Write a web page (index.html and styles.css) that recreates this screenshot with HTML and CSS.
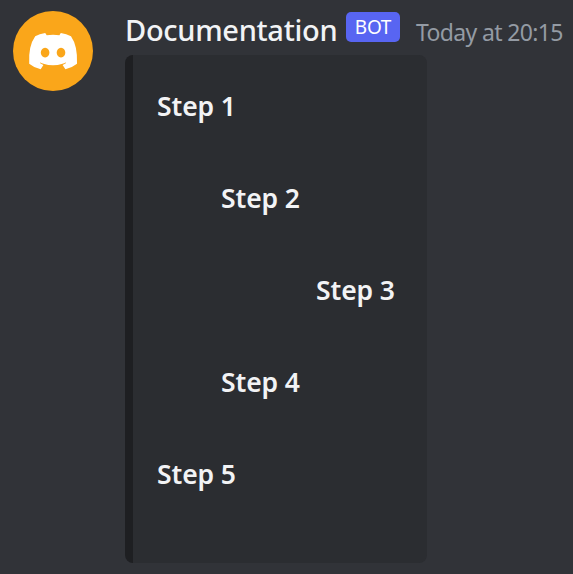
FILE: index.html
```html
<!DOCTYPE html>
<html lang="en">
<head>
<meta charset="utf-8">
<title>Documentation</title>
<link rel="stylesheet" href="styles.css">
</head>
<body>
<article class="message">
  <div class="avatar">
    <svg class="logo" viewBox="29 33 48 37" width="48" height="37">
      <path fill="#fff" fill-rule="evenodd" d="M45.2 32.9L46.7 35.2Q53 34.500 59.4 35.2L60.8 32.9Q66.5 33.8 71 36.2Q77.8 46 77 63.7Q72 67.7 65.4 69.3L62.6 65Q64.500 64.200 66.200 63L65.600 62.500Q64 63.200 62.500 63.800Q53 66.800 43.500 63.800Q42 63.200 40.400 62.500L39.800 63Q41.500 64.200 43.400 65L40.700 69.300Q34 67.700 29.200 63.700Q28.200 46 35.200 36.200Q39.500 33.800 45.200 32.900ZM45.100 47.800a4.300 4.800 0 1 0 .01 0ZM61 47.800a4.300 4.800 0 1 0 .01 0Z"/>
    </svg>
  </div>
  <div class="content">
    <header class="header">
      <span class="name">Documentation</span>
      <span class="bot">BOT</span>
      <time class="time">Today at 20:15</time>
    </header>
    <section class="embed">
      <div class="step left">Step 1</div>
      <div class="step middle">Step 2</div>
      <div class="step right">Step 3</div>
      <div class="step middle">Step 4</div>
      <div class="step left">Step 5</div>
    </section>
  </div>
</article>
</body>
</html>
```
FILE: styles.css
```css
* { box-sizing: border-box; }
body {
  margin: 0;
  height: 574px;
  overflow: hidden;
  background: #313338;
  font-family: "Noto Sans", sans-serif;
}
.message {
  display: flex;
  gap: 32px;
  padding: 11px 0 0 13px;
}
.avatar {
  display: flex;
  flex: none;
  align-items: center;
  justify-content: center;
  width: 80px;
  height: 80px;
  border-radius: 50%;
  background: #faa61a;
}
.logo { display: block; overflow: visible; }
.content { flex: none; width: 448px; }
.header {
  display: flex;
  height: 44px;
  white-space: nowrap;
}
.name {
  width: 221px;
  color: #f2f3f5;
  font-size: 29px;
  font-weight: 500;
  letter-spacing: -0.3px;
  line-height: 38px;
}
.bot {
  width: 54px;
  height: 30px;
  margin-top: 1px;
  border-radius: 5px;
  background: #5865f2;
  color: #fff;
  font-size: 19px;
  font-weight: 400;
  letter-spacing: -0.3px;
  line-height: 31px;
  text-align: center;
}
.time {
  margin-left: 16px;
  color: #949ba4;
  font-size: 23px;
  letter-spacing: -0.65px;
  line-height: 42px;
}
.embed {
  display: flex;
  flex-direction: column;
  width: 302px;
  height: 508px;
  padding: 28px 24px 0;
  border-left: 8px solid #1e1f22;
  border-radius: 8px;
  background: #2b2d31;
}
.step {
  flex: none;
  height: 92px;
  color: #f2f3f5;
  font-size: 26.500px;
  font-weight: 600;
  letter-spacing: -0.1px;
  line-height: 46px;
}
.middle { padding-left: 64px; }
.right { padding-left: 159px; }
```
